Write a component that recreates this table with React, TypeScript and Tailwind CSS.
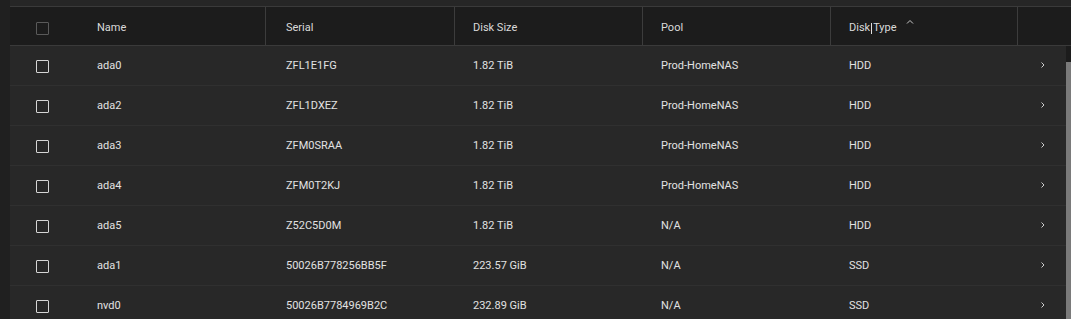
import React from 'react';

interface Disk {
  name: string;
  serial: string;
  size: string;
  pool: string;
  type: string;
}

const disks: Disk[] = [
  { name: 'ada0', serial: 'ZFL1E1FG', size: '1.82 TiB', pool: 'Prod-HomeNAS', type: 'HDD' },
  { name: 'ada2', serial: 'ZFL1DXEZ', size: '1.82 TiB', pool: 'Prod-HomeNAS', type: 'HDD' },
  { name: 'ada3', serial: 'ZFM0SRAA', size: '1.82 TiB', pool: 'Prod-HomeNAS', type: 'HDD' },
  { name: 'ada4', serial: 'ZFM0T2KJ', size: '1.82 TiB', pool: 'Prod-HomeNAS', type: 'HDD' },
  { name: 'ada5', serial: 'Z52C5D0M', size: '1.82 TiB', pool: 'N/A', type: 'HDD' },
  { name: 'ada1', serial: '50026B778256BB5F', size: '223.57 GiB', pool: 'N/A', type: 'SSD' },
  { name: 'nvd0', serial: '50026B7784969B2C', size: '232.89 GiB', pool: 'N/A', type: 'SSD' },
];

const Checkbox = ({ dim }: { dim?: boolean }) => (
  <div
    className={`w-[13px] h-[13px] rounded-[1px] border ${dim ? 'border-[#5a5a5a]' : 'border-[#d6d6d6]'}`}
  />
);

const Chevron = () => (
  <svg width="6" height="8" viewBox="0 0 6 8" className="text-[#d0d0d0]">
    <polyline points="1.5,1.5 4,4 1.5,6.5" fill="none" stroke="currentColor" strokeWidth="1" />
  </svg>
);

const SortUp = () => (
  <svg width="8" height="6" viewBox="0 0 8 6" className="text-[#c8c8c8]">
    <polyline points="1,4.5 4,1.5 7,4.5" fill="none" stroke="currentColor" strokeWidth="1" />
  </svg>
);

const App = () => {
  return (
    <div
      className="flex w-[1071px] h-[319px] overflow-hidden bg-[#202020] text-[11px]"
      style={{ fontFamily: 'Roboto, "Liberation Sans", sans-serif' }}
    >
      <div className="w-[10px] shrink-0 bg-[#202020]" />
      <div className="flex flex-col w-[1061px] shrink-0">
        <div className="h-[7px] shrink-0 bg-[#262626] border-b border-[#3a3a3a]" />

        {/* header */}
        <div className="flex h-[39px] shrink-0 bg-[#1c1c1c] border-b border-[#3a3a3a] text-[#dadada]">
          <div className="w-[68px] flex items-center pl-[26px] pt-[5px]">
            <Checkbox dim />
          </div>
          <div className="w-[187px] flex items-center pl-[19px] pt-[4px]">Name</div>
          <div className="w-[189px] flex items-center border-l border-[#3c3c3c] pl-[20px] pt-[4px]">Serial</div>
          <div className="w-[188px] flex items-center border-l border-[#3c3c3c] pl-[18px] pt-[4px]">Disk Size</div>
          <div className="w-[188px] flex items-center border-l border-[#3c3c3c] pl-[18px] pt-[4px]">Pool</div>
          <div className="w-[187px] flex items-center border-l border-[#3c3c3c] pl-[18px] pt-[4px]">
            <span>Disk</span>
            <span className="w-px h-[11px] bg-[#e0e0e0] mx-[1px]" />
            <span>Type</span>
            <span className="ml-[9px] -mt-[12px] flex">
              <SortUp />
            </span>
          </div>
          <div className="flex-1 border-l border-[#3c3c3c]" />
        </div>

        {/* body */}
        <div className="flex flex-1 shrink-0">
          <div className="w-[1056px] shrink-0 bg-[#282828] text-[#e2e2e2]">
            {disks.map((d) => (
              <div key={d.name} className="flex h-[40px] shrink-0 border-b border-[#303030]">
                <div className="w-[68px] flex items-center pl-[26px] pt-[1px]">
                  <Checkbox />
                </div>
                <div className="w-[187px] flex items-center pl-[19px] pt-[1px]">{d.name}</div>
                <div className="w-[189px] flex items-center pl-[21px] pt-[1px]">{d.serial}</div>
                <div className="w-[188px] flex items-center pl-[19px] pt-[1px]">{d.size}</div>
                <div className="w-[188px] flex items-center pl-[19px] pt-[1px]">{d.pool}</div>
                <div className="w-[187px] flex items-center pl-[19px] pt-[1px]">{d.type}</div>
                <div className="flex-1 flex items-center pl-[23px] pb-[2px]">
                  <Chevron />
                </div>
              </div>
            ))}
          </div>
          <div className="w-[5px] flex flex-col">
            <div className="h-[16px] bg-[#1c1c1c]" />
            <div className="flex-1 bg-[#7a7a7a]" />
          </div>
        </div>
      </div>
    </div>
  );
};

export default App;
